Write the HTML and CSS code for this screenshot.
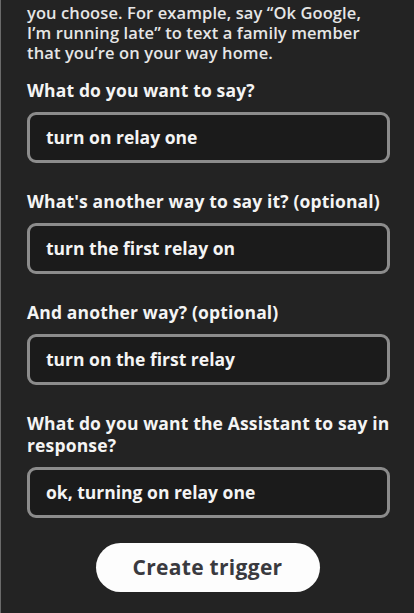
FILE: index.html
```html
<!DOCTYPE html>
<html lang="en">
<head>
<meta charset="utf-8">
<title>Create trigger</title>
<link rel="stylesheet" href="styles.css">
</head>
<body>
<main class="screen">
  <p class="intro">you choose. For example, say “Ok Google,<br>I’m running late” to text a family member<br>that you’re on your way home.</p>

  <div class="field">
    <label class="label">What do you want to say?</label>
    <div class="input">turn on relay one</div>
  </div>

  <div class="field">
    <label class="label">What's another way to say it? (optional)</label>
    <div class="input">turn the first relay on</div>
  </div>

  <div class="field">
    <label class="label">And another way? (optional)</label>
    <div class="input">turn on the first relay</div>
  </div>

  <div class="field">
    <label class="label">What do you want the Assistant to say in<br>response?</label>
    <div class="input">ok, turning on relay one</div>
  </div>

  <div class="actions">
    <button class="btn">Create trigger</button>
  </div>
</main>
</body>
</html>
```

FILE: styles.css
```css
html, body {
  margin: 0;
  padding: 0;
  background: #232323;
}
body {
  width: 414px;
  height: 613px;
  overflow: hidden;
  font-family: "Open Sans", "Noto Sans", sans-serif;
  color: #f1f1f1;
}
.screen {
  padding: 3px 24px 0 26px;
  border-left: 1px solid #6a6a6a;
  box-sizing: border-box;
  height: 613px;
}
.intro {
  margin: 0;
  font-size: 16.5px;
  font-weight: 600;
  line-height: 20px;
  letter-spacing: 0.1px;
  color: #e6e6e6;
  white-space: nowrap;
}
.field {
  display: flex;
  flex-direction: column;
}
.field:first-of-type {
  margin-top: 16px;
}
.field + .field {
  margin-top: 27px;
}
.label {
  font-size: 17.5px;
  font-weight: 700;
  line-height: 22px;
  letter-spacing: 0.15px;
  color: #f4f4f4;
  margin-bottom: 11px;
  white-space: nowrap;
}
.input {
  height: 51px;
  box-sizing: border-box;
  border: 3px solid #8c8c8c;
  border-radius: 9px;
  background: #1b1b1b;
  padding: 0 0 1px 16px;
  display: flex;
  align-items: center;
  font-size: 17.5px;
  font-weight: 700;
  color: #f4f4f4;
}
.actions {
  display: flex;
  justify-content: center;
  margin-top: 25px;
  padding-right: 2px;
}
.btn {
  width: 224px;
  height: 49px;
  border: none;
  border-radius: 25px;
  background: #fdfdfd;
  color: #3a3a3f;
  font-family: "Open Sans", "Noto Sans", sans-serif;
  font-size: 21px;
  font-weight: 700;
  letter-spacing: 0.3px;
  padding: 0 0 2px;
}
```
